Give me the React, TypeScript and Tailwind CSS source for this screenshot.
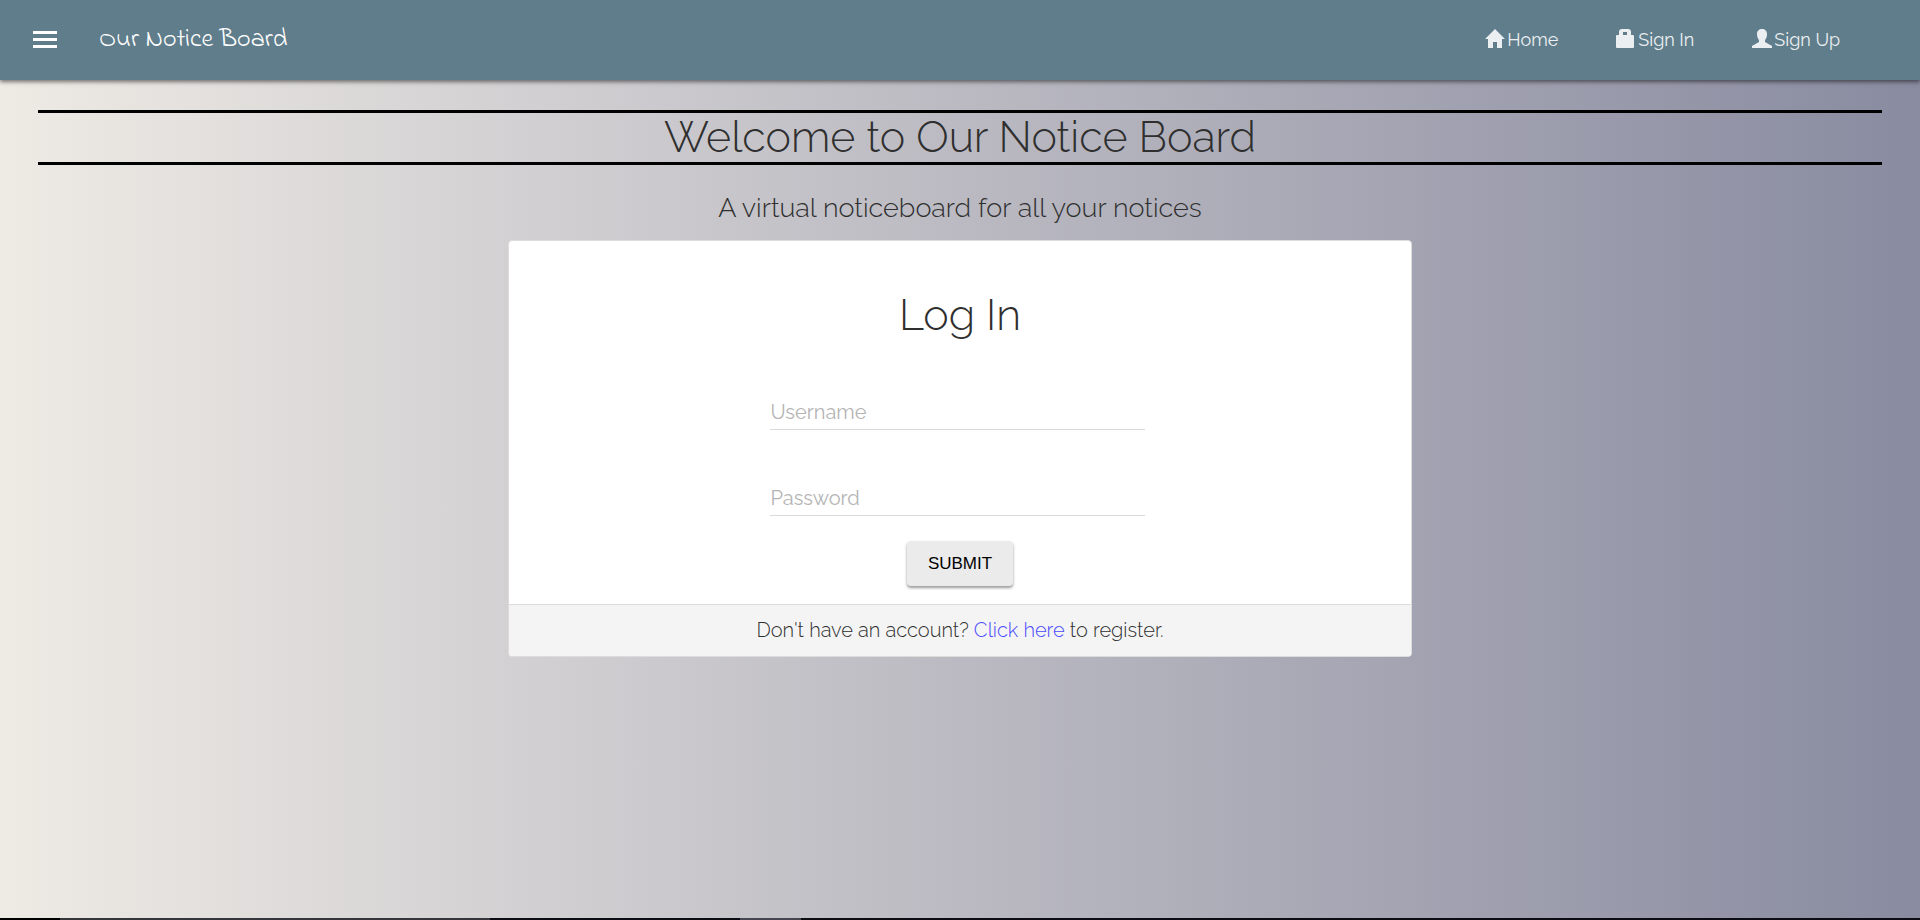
import type { ReactNode } from "react";

const GLYPHS = {
  home: "M10 0 L20 10 H17 V19 H12 V13 H8 V19 H3 V10 H0 Z",
  lock: "M6 0 H12 Q15 0 15 3 V6 H17 Q18 6 18 7 V18 Q18 19 17 19 H1 Q0 19 0 18 V7 Q0 6 1 6 H3 V3 Q3 0 6 0 Z M7 3 V6 H11 V3 Z",
  user: "M10 0 C13 0 15 2 15 5 C15 8 14 10 13 11 V13 C16 15 19 16 20 17 V19 H0 V17 C1 16 4 15 7 13 V11 C6 10 5 8 5 5 C5 2 7 0 10 0 Z",
};

function NavLink({ icon, children }: { icon: keyof typeof GLYPHS; children: ReactNode }) {
  return (
    <a href="#" className="flex items-center gap-[2px] text-lg text-[#ebeff2]">
      <svg viewBox="0 0 20 19" className="mb-1 h-[19px] w-5" fill="currentColor" fillRule="evenodd" aria-hidden="true">
        <path d={GLYPHS[icon]} />
      </svg>
      {children}
    </a>
  );
}

function Field({ id, label, type }: { id: string; label: string; type: string }) {
  return (
    <div className="relative">
      <input
        id={id}
        type={type}
        placeholder=" "
        className="peer block h-[46px] w-full border-b border-[#dadada] bg-transparent pt-2 text-xl text-[#333] outline-none"
      />
      <label
        htmlFor={id}
        className="absolute left-0 top-[14px] text-xl leading-7 text-[#b4b4b4] peer-focus:-top-3 peer-focus:text-base peer-[:not(:placeholder-shown)]:-top-3 peer-[:not(:placeholder-shown)]:text-base"
      >
        {label}
      </label>
    </div>
  );
}

export default function App() {
  return (
    <div className="flex min-h-screen flex-col bg-linear-to-r from-[#eeebe5] via-[#bbbac2] to-[#898ba0] font-['Raleway','Lato',sans-serif] text-[#2f2f2f]">
      <header className="relative flex h-20 items-center bg-[#607d8b] pb-[2px] pl-[33px] pr-20 shadow-[0_2px_4px_rgba(0,0,0,0.5)]">
        <button type="button" aria-label="Menu" className="flex w-6 flex-col gap-1">
          <span className="h-[3px] w-full bg-white" />
          <span className="h-[3px] w-full bg-white" />
          <span className="h-[3px] w-full bg-white" />
        </button>
        <a href="#" className="ml-[42px] pt-[2px] font-['Indie_Flower','Lato',cursive] text-[26px] text-white">Our Notice Board</a>
        <nav className="ml-auto flex gap-[58px] pt-[2px]">
          <NavLink icon="home">Home</NavLink>
          <NavLink icon="lock">Sign In</NavLink>
          <NavLink icon="user">Sign Up</NavLink>
        </nav>
      </header>

      <main className="flex grow flex-col px-[38px] pt-[30px]">
        <h1 className="border-y-[3px] border-black text-center text-[43px] font-light leading-[49px]">
          Welcome to Our Notice Board
        </h1>
        <p className="pb-[14px] pt-[25px] text-center text-[27px] font-light leading-9">
          A virtual noticeboard for all your notices
        </p>
        <section className="mx-auto w-[49%] overflow-hidden rounded border border-[#dcdcdc] bg-white">
          <form className="flex flex-col items-center pb-[18px] pt-[50px]" onSubmit={(e) => e.preventDefault()}>
            <h2 className="text-[43px] font-light leading-[49px]">Log In</h2>
            <div className="mb-[25px] mr-1 mt-11 flex w-[375px] flex-col gap-10">
              <Field id="username" label="Username" type="text" />
              <Field id="password" label="Password" type="password" />
            </div>
            <button
              type="submit"
              className="h-[45px] rounded-sm bg-[#ebebeb] px-[21px] font-['Liberation_Sans',sans-serif] text-[17px] text-black shadow-[0_2px_3px_rgba(0,0,0,0.4)]"
            >
              SUBMIT
            </button>
          </form>
          <div className="border-t border-[#dcdcdc] bg-[#f4f4f4] text-center text-xl font-light leading-[51px]">
            Don't have an account? <a href="#" className="text-[#4a4aff]">Click here</a> to register.
          </div>
        </section>
      </main>
      <div className="flex h-[2px] bg-[#0c0d14]" aria-hidden="true">
        <span className="w-[60px] bg-black" />
        <span className="w-[430px] bg-[#35363b]" />
        <span className="ml-[250px] w-[61px] bg-[#45464f]" />
      </div>
    </div>
  );
}
